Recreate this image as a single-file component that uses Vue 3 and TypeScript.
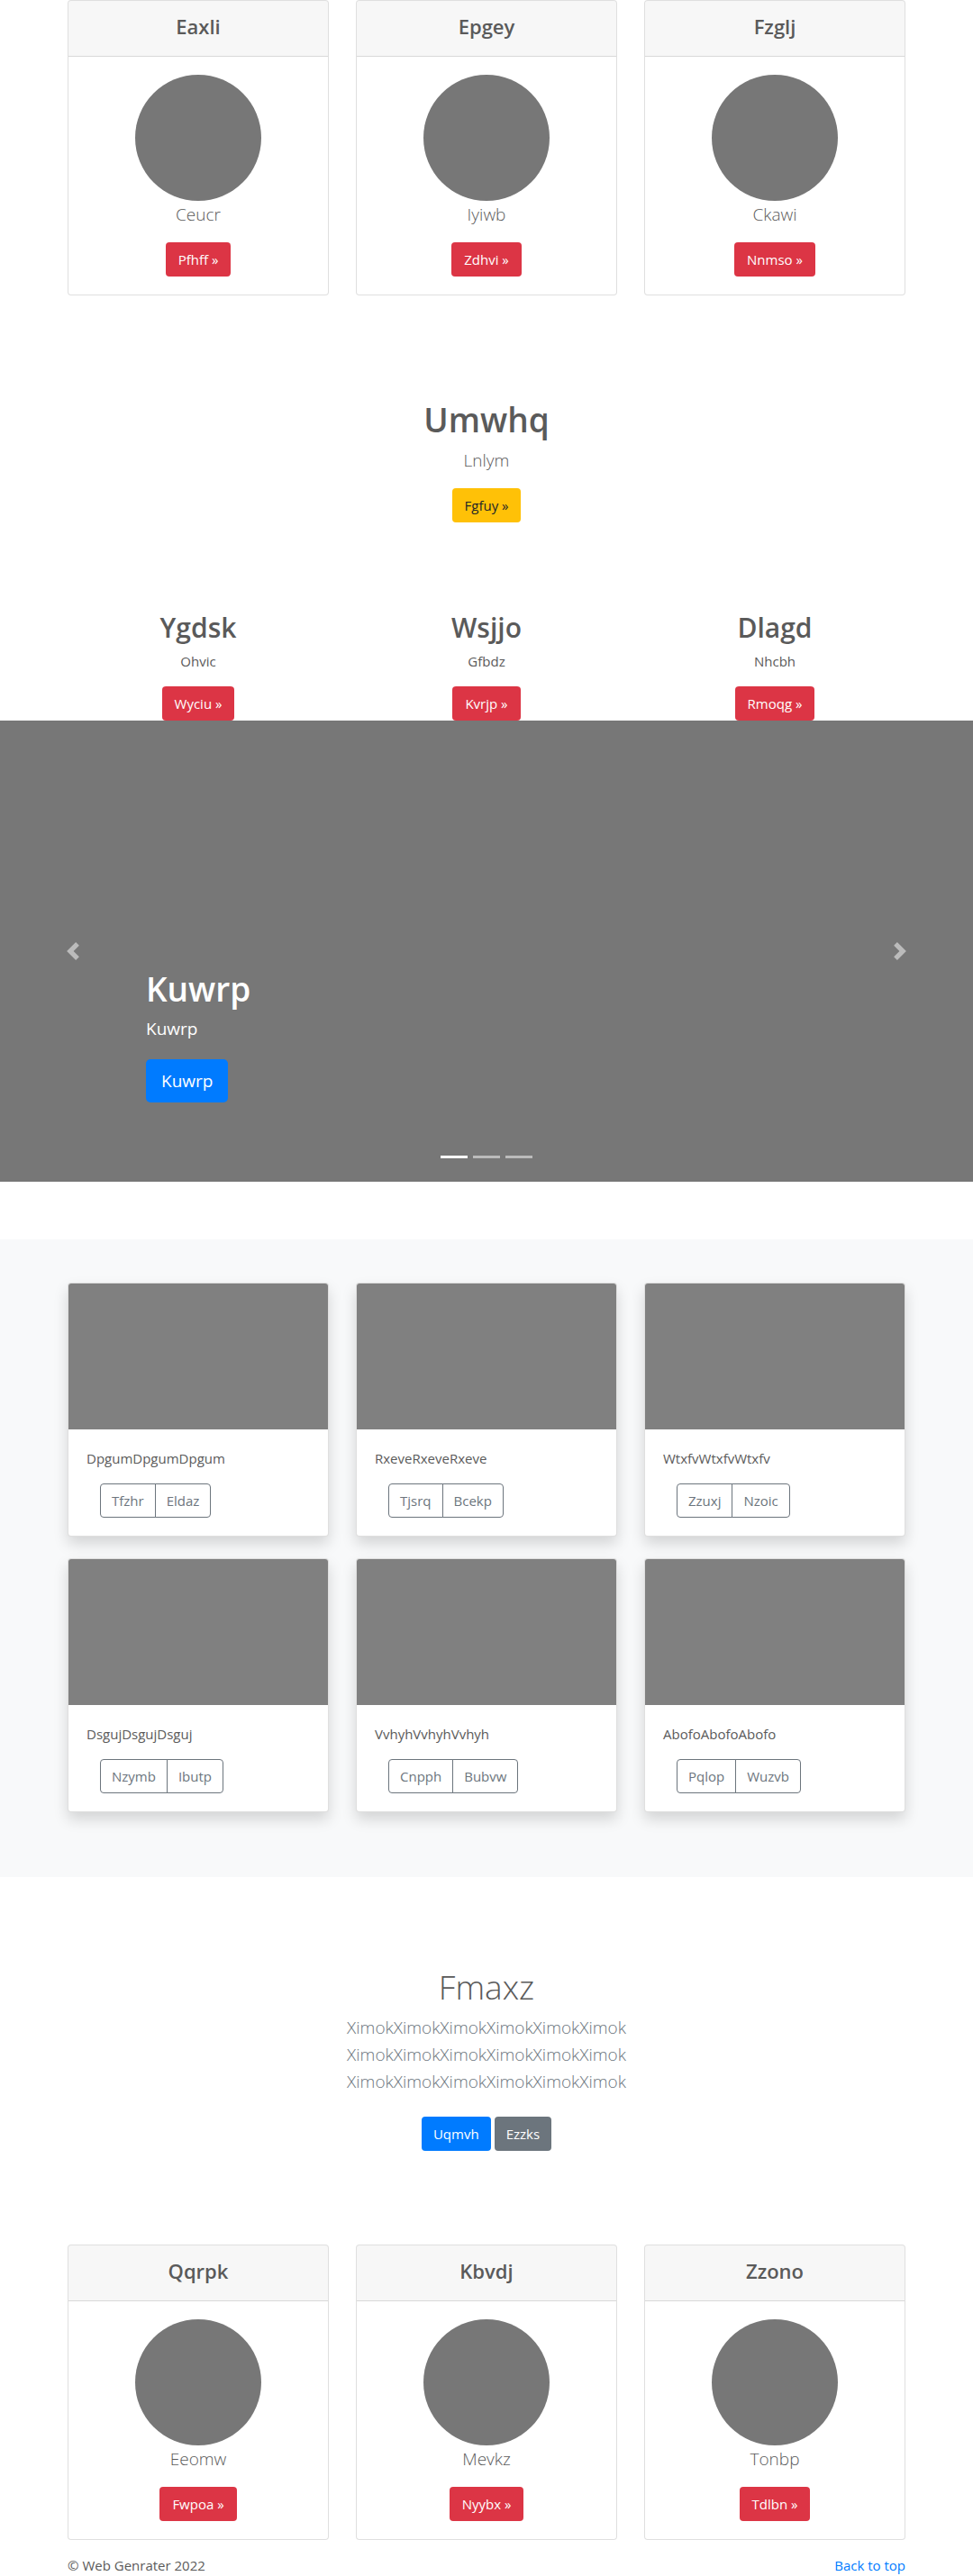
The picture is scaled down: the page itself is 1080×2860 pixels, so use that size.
<script setup lang="ts">
import { ref } from 'vue'

interface Profile {
  title: string
  text: string
  action: string
}

interface AlbumItem {
  text: string
  view: string
  edit: string
}

const topProfiles: Profile[] = [
  { title: 'Eaxli', text: 'Ceucr', action: 'Pfhff' },
  { title: 'Epgey', text: 'Iyiwb', action: 'Zdhvi' },
  { title: 'Fzglj', text: 'Ckawi', action: 'Nnmso' },
]

const features: Profile[] = [
  { title: 'Ygdsk', text: 'Ohvic', action: 'Wyciu' },
  { title: 'Wsjjo', text: 'Gfbdz', action: 'Kvrjp' },
  { title: 'Dlagd', text: 'Nhcbh', action: 'Rmoqg' },
]

const album: AlbumItem[] = [
  { text: 'DpgumDpgumDpgum', view: 'Tfzhr', edit: 'Eldaz' },
  { text: 'RxeveRxeveRxeve', view: 'Tjsrq', edit: 'Bcekp' },
  { text: 'WtxfvWtxfvWtxfv', view: 'Zzuxj', edit: 'Nzoic' },
  { text: 'DsgujDsgujDsguj', view: 'Nzymb', edit: 'Ibutp' },
  { text: 'VvhyhVvhyhVvhyh', view: 'Cnpph', edit: 'Bubvw' },
  { text: 'AbofoAbofoAbofo', view: 'Pqlop', edit: 'Wuzvb' },
]

const bottomProfiles: Profile[] = [
  { title: 'Qqrpk', text: 'Eeomw', action: 'Fwpoa' },
  { title: 'Kbvdj', text: 'Mevkz', action: 'Nyybx' },
  { title: 'Zzono', text: 'Tonbp', action: 'Tdlbn' },
]

const leadLines: string[] = Array.from({ length: 3 }, () => 'Ximok'.repeat(6))

const slideCount = 3
const activeSlide = ref(0)

function move(step: number): void {
  activeSlide.value = (activeSlide.value + step + slideCount) % slideCount
}
</script>

<template>
  <div id="top" class="page">
    <main>
      <section class="container columns">
        <article v-for="item in topProfiles" :key="item.title" class="card profile">
          <header class="card-header">
            <h4>{{ item.title }}</h4>
          </header>
          <div class="card-body">
            <div class="avatar"></div>
            <p class="lead">{{ item.text }}</p>
            <a class="btn btn-danger" href="#">{{ item.action }} »</a>
          </div>
        </article>
      </section>

      <section class="container intro intro-first">
        <h1>Umwhq</h1>
        <p class="lead">Lnlym</p>
        <a class="btn btn-warning" href="#">Fgfuy »</a>
      </section>

      <section class="container columns">
        <article v-for="item in features" :key="item.title" class="feature">
          <h2>{{ item.title }}</h2>
          <p>{{ item.text }}</p>
          <a class="btn btn-danger" href="#">{{ item.action }} »</a>
        </article>
      </section>

      <section class="carousel" aria-label="Kuwrp">
        <div class="caption">
          <h1>Kuwrp</h1>
          <p>Kuwrp</p>
          <a class="btn btn-primary btn-lg" href="#">Kuwrp</a>
        </div>
        <button class="control control-prev" type="button" aria-label="Previous" @click="move(-1)">
          <svg viewBox="0 0 8 8" aria-hidden="true">
            <path d="M5.25 0l-4 4 4 4 1.5-1.5-2.5-2.5 2.5-2.5-1.5-1.5z" />
          </svg>
        </button>
        <button class="control control-next" type="button" aria-label="Next" @click="move(1)">
          <svg viewBox="0 0 8 8" aria-hidden="true">
            <path d="M2.75 0l-1.5 1.5 2.5 2.5-2.5 2.5 1.5 1.5 4-4-4-4z" />
          </svg>
        </button>
        <div class="indicators">
          <button
            v-for="n in slideCount"
            :key="n"
            type="button"
            :class="{ active: activeSlide === n - 1 }"
            :aria-label="`Slide ${n}`"
            @click="activeSlide = n - 1"
          ></button>
        </div>
      </section>

      <section class="album">
        <div class="container columns">
          <article v-for="item in album" :key="item.text" class="card album-card">
            <div class="thumb"></div>
            <div class="card-body">
              <p>{{ item.text }}</p>
              <div class="btn-group">
                <button class="btn btn-outline" type="button">{{ item.view }}</button>
                <button class="btn btn-outline" type="button">{{ item.edit }}</button>
              </div>
            </div>
          </article>
        </div>
      </section>

      <section class="container intro intro-second">
        <h1>Fmaxz</h1>
        <p class="lead">
          <span v-for="(line, i) in leadLines" :key="i">{{ line }}</span>
        </p>
        <div class="actions">
          <a class="btn btn-primary" href="#">Uqmvh</a>
          <a class="btn btn-secondary" href="#">Ezzks</a>
        </div>
      </section>

      <section class="container columns">
        <article v-for="item in bottomProfiles" :key="item.title" class="card profile">
          <header class="card-header">
            <h4>{{ item.title }}</h4>
          </header>
          <div class="card-body">
            <div class="avatar"></div>
            <p class="lead">{{ item.text }}</p>
            <a class="btn btn-danger" href="#">{{ item.action }} »</a>
          </div>
        </article>
      </section>
    </main>

    <footer class="container footer">
      <p>© Web Genrater 2022</p>
      <a href="#top">Back to top</a>
    </footer>
  </div>
</template>

<style>
body {
  margin: 0;
  background: #fff;
}
</style>

<style scoped>
.page,
.page * {
  box-sizing: border-box;
}

.page {
  color: #5a5a5a;
  font-family: 'Segoe UI', 'Open Sans', 'Noto Sans', sans-serif;
  font-size: 15px;
  line-height: 24px;
}

h1,
h2,
h4 {
  margin: 0 0 5px;
  font-weight: 600;
}

h1 {
  font-size: 37px;
  line-height: 51px;
}

h2 {
  font-size: 30px;
  line-height: 41px;
}

h4 {
  font-size: 22px;
  line-height: 32px;
}

p {
  margin: 0 0 16px;
}

.lead {
  font-size: 19px;
  font-weight: 300;
  line-height: 30px;
}

.container {
  width: 100%;
  max-width: 960px;
  margin: 0 auto;
  padding: 0 15px;
}

.columns {
  display: grid;
  grid-template-columns: repeat(3, 1fr);
  gap: 24px 30px;
}

.btn {
  display: inline-block;
  padding: 6px 12px;
  border: 1px solid transparent;
  border-radius: 4px;
  background: transparent;
  color: #fff;
  font-family: inherit;
  font-size: 15px;
  line-height: 24px;
  text-align: center;
  text-decoration: none;
  white-space: nowrap;
  cursor: pointer;
}

.btn-danger,
.btn-warning {
  padding-right: 13px;
  padding-left: 13px;
}

.btn-danger {
  background: #dc3545;
}

.btn-warning {
  background: #ffc107;
  color: #212529;
}

.btn-primary {
  background: #007bff;
}

.btn-secondary {
  background: #6c757d;
}

.btn-outline {
  border-color: #6c757d;
  color: #6c757d;
}

.btn-lg {
  padding: 8px 16px;
  border-radius: 5px;
  font-size: 19px;
  line-height: 30px;
}

.card {
  display: flex;
  flex-direction: column;
  border: 1px solid rgba(0, 0, 0, 0.125);
  border-radius: 4px;
  background: #fff;
}

.card-body {
  flex: 1;
  padding: 20px;
}

.profile .card-body,
.card-header,
.feature,
.intro {
  display: flex;
  flex-direction: column;
  align-items: center;
  text-align: center;
}

.card-header {
  padding: 12px 20px;
  border-bottom: 1px solid rgba(0, 0, 0, 0.125);
  border-radius: 3px 3px 0 0;
  background: rgba(0, 0, 0, 0.03);
}

.avatar {
  width: 140px;
  height: 140px;
  border-radius: 50%;
  background: #777;
}

.intro-first {
  padding-top: 112px;
  padding-bottom: 96px;
}

.intro-second {
  padding-top: 96px;
  padding-bottom: 104px;
}

.intro-second h1 {
  font-weight: 300;
}

.intro-second .lead {
  margin-bottom: 24px;
  color: #6c757d;
}

.intro-second .lead span {
  display: block;
}

.actions {
  display: flex;
  gap: 4px;
}

.carousel {
  position: relative;
  display: flex;
  align-items: flex-end;
  min-height: 512px;
  margin-bottom: 64px;
  padding: 0 15% 88px;
  background: #777;
  color: #fff;
}

.caption {
  font-size: 19px;
  line-height: 28px;
}

.caption p {
  margin-bottom: 20px;
}

.caption .btn {
  vertical-align: top;
}

.control {
  position: absolute;
  top: 0;
  bottom: 0;
  display: flex;
  align-items: center;
  justify-content: center;
  width: 15%;
  padding: 0;
  border: 0;
  background: none;
  opacity: 0.5;
  cursor: pointer;
}

.control-prev {
  left: 0;
}

.control-next {
  right: 0;
}

.control svg {
  width: 20px;
  height: 20px;
  fill: #fff;
}

.indicators {
  position: absolute;
  right: 0;
  bottom: 26px;
  left: 0;
  display: flex;
  justify-content: center;
  gap: 6px;
}

.indicators button {
  width: 30px;
  height: 3px;
  padding: 0;
  border: 0;
  background: #fff;
  opacity: 0.5;
  cursor: pointer;
}

.indicators .active {
  opacity: 1;
}

.album {
  padding: 48px 0 72px;
  background: #f8f9fa;
}

.album-card {
  box-shadow: 0 8px 16px rgba(0, 0, 0, 0.15);
}

.thumb {
  height: 162px;
  border-radius: 3px 3px 0 0;
  background: #808080;
}

.btn-group {
  display: flex;
  padding: 0 15px;
}

.btn-group .btn:first-child {
  border-radius: 4px 0 0 4px;
}

.btn-group .btn:last-child {
  margin-left: -1px;
  border-radius: 0 4px 4px 0;
}

.footer {
  display: flex;
  justify-content: space-between;
  padding-top: 16px;
}

.footer p {
  margin: 0;
}

.footer a {
  color: #007bff;
  text-decoration: none;
}
</style>
